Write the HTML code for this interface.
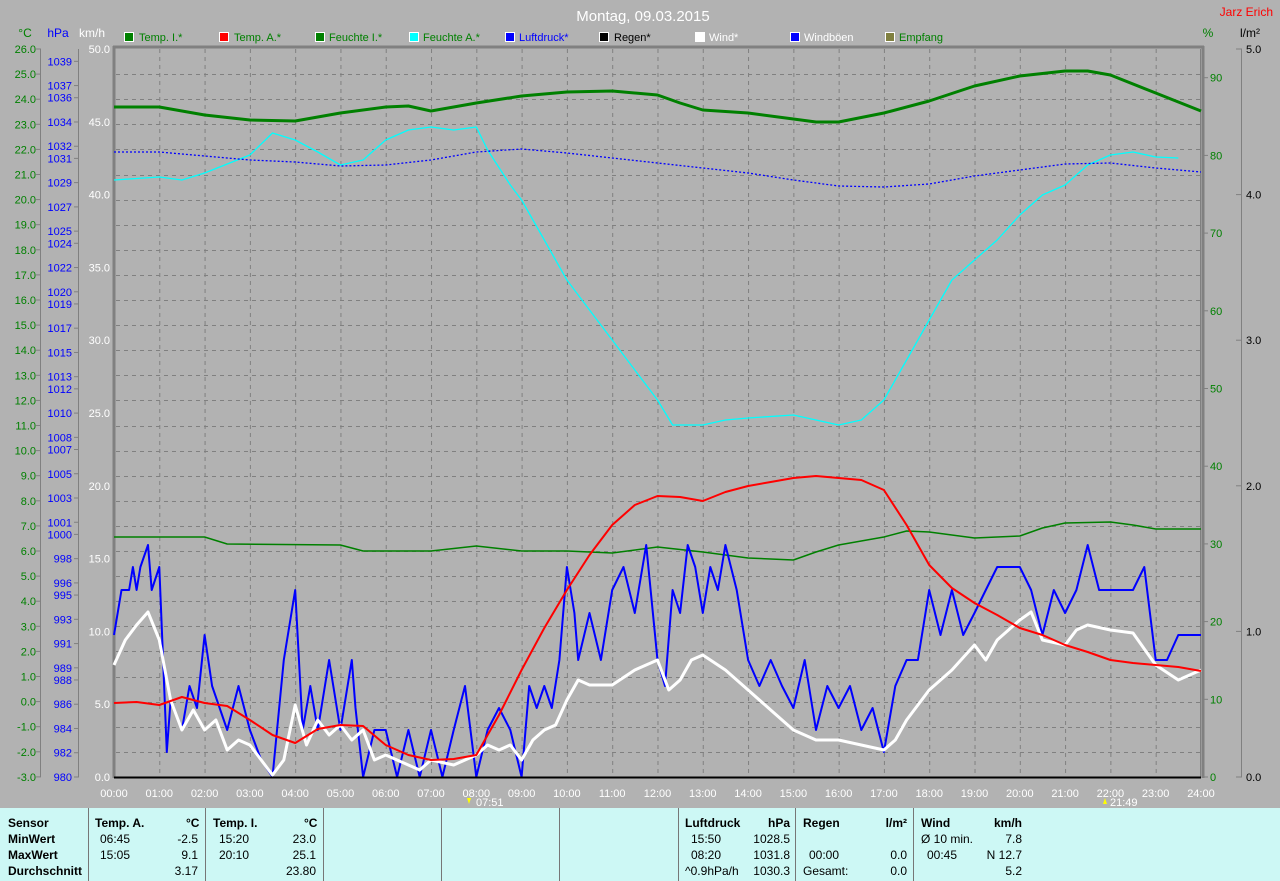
<!DOCTYPE html>
<html><head><meta charset="utf-8"><style>
body{margin:0;width:1280px;height:881px;background:#b2b2b2;overflow:hidden;font-family:"Liberation Sans",sans-serif;position:relative}
svg{position:absolute;left:0;top:0}
.tbl{position:absolute;left:0;top:808px;width:1280px;height:73px;background:#cdf8f5;font-size:12px;color:#000}
.tbl div{position:absolute;white-space:nowrap}
.b{font-weight:bold}
.vl{position:absolute;top:0;width:1px;height:73px;background:#777}
</style></head><body>
<svg width="1280" height="808" id="s" font-family="Liberation Sans, sans-serif" font-size="12">
<text x="643" y="21" fill="#fff" font-size="15" text-anchor="middle">Montag, 09.03.2015</text>
<text x="1273" y="16" fill="#f00" text-anchor="end" font-size="12">Jarz Erich</text>
<text x="25" y="37" fill="#008000" text-anchor="middle">°C</text>
<text x="58" y="37" fill="#00f" text-anchor="middle">hPa</text>
<text x="92" y="37" fill="#fff" text-anchor="middle">km/h</text>
<text x="1208" y="37" fill="#008000" text-anchor="middle">%</text>
<text x="1250" y="37" fill="#000" text-anchor="middle">l/m²</text>
<g font-size="11">
<rect x="124.5" y="32.5" width="9" height="9" fill="#008000" stroke="#fff"/><text x="139" y="41" fill="#008000">Temp. I.*</text>
<rect x="219.5" y="32.5" width="9" height="9" fill="#f00" stroke="#fff"/><text x="234" y="41" fill="#008000">Temp. A.*</text>
<rect x="315.5" y="32.5" width="9" height="9" fill="#008000" stroke="#fff"/><text x="329" y="41" fill="#008000">Feuchte I.*</text>
<rect x="409.5" y="32.5" width="9" height="9" fill="#0ff" stroke="#fff"/><text x="423" y="41" fill="#008000">Feuchte A.*</text>
<rect x="505.5" y="32.5" width="9" height="9" fill="#00f" stroke="#fff"/><text x="519" y="41" fill="#00f">Luftdruck*</text>
<rect x="599.5" y="32.5" width="9" height="9" fill="#000" stroke="#fff"/><text x="614" y="41" fill="#000">Regen*</text>
<rect x="695.5" y="32.5" width="9" height="9" fill="#fff" stroke="#fff"/><text x="709" y="41" fill="#fff">Wind*</text>
<rect x="790.5" y="32.5" width="9" height="9" fill="#00f" stroke="#fff"/><text x="804" y="41" fill="#fff">Windböen</text>
<rect x="885.5" y="32.5" width="9" height="9" fill="#808040" stroke="#fff"/><text x="899" y="41" fill="#008000">Empfang</text>
</g>
<g id="grid" stroke="#808080" stroke-dasharray="4,4" stroke-width="1"></g>
<g stroke="#808080" fill="none">
<line x1="40.5" y1="49" x2="40.5" y2="777"/>
<line x1="78.5" y1="49" x2="78.5" y2="777"/>
<line x1="1241.5" y1="49" x2="1241.5" y2="777"/>
<line x1="1200.5" y1="49" x2="1200.5" y2="777"/>
<line x1="113" y1="47" x2="1204" y2="47" stroke-width="3"/>
<line x1="114" y1="46" x2="114" y2="778" stroke-width="3"/>
<line x1="1203" y1="46" x2="1203" y2="778" stroke-width="3"/>
</g>
<g id="ticks" stroke="#808080"></g>
<g font-size="11" id="lab"></g>
<g id="curves" fill="none" stroke-linejoin="round"></g>
<line x1="114" y1="777.5" x2="1201" y2="777.5" stroke="#000" stroke-width="2"/>
<g fill="#fff" font-size="11" id="tl"></g>
<text x="476" y="806" fill="#fff" font-size="11">07:51</text>
<path d="M467 798l4 0-2 6z" fill="#ff0"/>
<text x="1110" y="806" fill="#fff" font-size="11">21:49</text>
<path d="M1103 804l4 0-2-6z" fill="#ff0"/>
</svg>
<div class="tbl">
<div class="vl" style="left:88px"></div><div class="vl" style="left:205px"></div><div class="vl" style="left:323px"></div><div class="vl" style="left:441px"></div><div class="vl" style="left:559px"></div><div class="vl" style="left:678px"></div><div class="vl" style="left:795px"></div><div class="vl" style="left:913px"></div>
<div class="b" style="left:8px;top:8px">Sensor</div><div class="b" style="left:8px;top:24px">MinWert</div><div class="b" style="left:8px;top:40px">MaxWert</div><div class="b" style="left:8px;top:56px">Durchschnitt</div>
<div class="b" style="left:95px;top:8px">Temp. A.</div><div class="b" style="left:186px;top:8px">°C</div>
<div style="left:100px;top:24px">06:45</div><div style="right:1082px;top:24px">-2.5</div>
<div style="left:100px;top:40px">15:05</div><div style="right:1082px;top:40px">9.1</div>
<div style="right:1082px;top:56px">3.17</div>
<div class="b" style="left:213px;top:8px">Temp. I.</div><div class="b" style="left:304px;top:8px">°C</div>
<div style="left:219px;top:24px">15:20</div><div style="right:964px;top:24px">23.0</div>
<div style="left:219px;top:40px">20:10</div><div style="right:964px;top:40px">25.1</div>
<div style="right:964px;top:56px">23.80</div>
<div class="b" style="left:685px;top:8px">Luftdruck</div><div class="b" style="right:490px;top:8px">hPa</div>
<div style="left:691px;top:24px">15:50</div><div style="right:490px;top:24px">1028.5</div>
<div style="left:691px;top:40px">08:20</div><div style="right:490px;top:40px">1031.8</div>
<div style="left:685px;top:56px">^0.9hPa/h</div><div style="right:490px;top:56px">1030.3</div>
<div class="b" style="left:803px;top:8px">Regen</div><div class="b" style="right:373px;top:8px">l/m²</div>
<div style="left:809px;top:40px">00:00</div><div style="right:373px;top:40px">0.0</div>
<div style="left:803px;top:56px">Gesamt:</div><div style="right:373px;top:56px">0.0</div>
<div class="b" style="left:921px;top:8px">Wind</div><div class="b" style="right:258px;top:8px">km/h</div>
<div style="left:921px;top:24px">Ø 10 min.</div><div style="right:258px;top:24px">7.8</div>
<div style="left:927px;top:40px">00:45</div><div style="right:258px;top:40px">N 12.7</div>
<div style="right:258px;top:56px">5.2</div>
</div>
<script>
var NS="http://www.w3.org/2000/svg";
function el(p,t,a,txt){var e=document.createElementNS(NS,t);for(var k in a)e.setAttribute(k,a[k]);if(txt!=null)e.textContent=txt;document.getElementById(p).appendChild(e);return e;}
var X=function(h){return 114+h*45.29;};
for(var h=1;h<24;h++){el("grid","line",{x1:X(h)+.5,y1:49,x2:X(h)+.5,y2:777});}
for(var k=1;k<29;k++){var y=49+k*25.1;el("grid","line",{x1:116,y1:Math.round(y)+.5,x2:1200,y2:Math.round(y)+.5});}
for(var h=0;h<=24;h++){el("tl","text",{x:X(h),y:797,"text-anchor":"middle"},(h<10?"0":"")+h+":00");}
for(var k=0;k<=29;k++){var v=26-k,y=49+k*25.1;el("lab","text",{x:36,y:y+4,fill:"#008000","text-anchor":"end"},v.toFixed(1));el("ticks","line",{x1:36,y1:y,x2:41,y2:y});}
[1039,1037,1036,1034,1032,1031,1029,1027,1025,1024,1022,1020,1019,1017,1015,1013,1012,1010,1008,1007,1005,1003,1001,1000,998,996,995,993,991,989,988,986,984,982,980].forEach(function(v){var y=777-(v-980)*12.13;el("lab","text",{x:72,y:y+4,fill:"#00f","text-anchor":"end"},v);el("ticks","line",{x1:74,y1:y,x2:79,y2:y});});
for(var k=0;k<=10;k++){var y=777-k*72.8;el("lab","text",{x:110,y:y+4,fill:"#fff","text-anchor":"end"},(k*5).toFixed(1));}
for(var k=0;k<=9;k++){var y=777-k*77.7;el("lab","text",{x:1210,y:y+4,fill:"#008000"},k*10);el("ticks","line",{x1:1203,y1:y,x2:1208,y2:y});}
for(var k=0;k<=5;k++){var y=777-k*145.6;el("lab","text",{x:1246,y:y+4,fill:"#000"},k.toFixed(1));el("ticks","line",{x1:1236,y1:y,x2:1242,y2:y});}
function T(s){var p=s.split(":");return +p[0]+(+p[1])/60;}
function curve(d,c,w,dash){var pts=[];for(var i=0;i<d.length;i+=2)pts.push(X(T(d[i])).toFixed(1)+","+d[i+1]);var a={points:pts.join(" "),stroke:c,"stroke-width":w};if(dash)a["stroke-dasharray"]=dash;el("curves","polyline",a);}
curve(["0:00",537,"2:00",537,"2:30",544,"5:00",545,"5:30",551,"7:00",551,"8:00",546,"9:00",551,"10:00",551,"11:00",553,"12:00",547,"13:00",552,"14:00",558,"15:00",560,"15:30",552,"16:00",545,"17:00",537,"17:30",531,"18:00",532,"19:00",538,"20:00",536,"20:30",528,"21:00",523,"22:00",522,"22:30",525,"23:00",529,"24:00",529],"#008000",1.5);
curve(["0:00",180,"1:00",177,"1:30",180,"2:00",173,"3:00",155,"3:30",133,"4:00",140,"4:30",152,"5:00",165,"5:30",160,"6:00",140,"6:30",130,"7:00",127,"7:30",130,"8:00",127,"8:15",150,"8:45",185,"9:00",200,"9:30",240,"10:00",280,"10:30",310,"11:00",340,"11:30",370,"12:00",400,"12:20",425,"13:00",425,"13:30",420,"14:00",418,"15:00",415,"15:30",420,"16:00",425,"16:30",420,"17:00",400,"17:30",360,"18:00",320,"18:30",280,"19:00",260,"19:30",240,"20:00",215,"20:30",195,"21:00",185,"21:30",165,"22:00",155,"22:30",152,"23:00",157,"23:30",158],"#00ffff",1.3);
curve(["0:00",152,"1:00",152,"2:00",156,"3:00",160,"4:00",162,"5:00",166,"6:00",165,"7:00",160,"8:00",152,"9:00",149,"10:00",153,"11:00",158,"12:00",163,"13:00",168,"14:00",173,"15:00",180,"16:00",186,"17:00",187,"18:00",184,"19:00",176,"20:00",170,"21:00",164,"22:00",163,"23:00",168,"24:00",172],"#0000ff",1.3,"2,2");
curve(["0:00",107,"1:00",107,"2:00",115,"3:00",120,"4:00",121,"5:00",113,"6:00",107,"6:30",106,"7:00",111,"8:00",103,"9:00",96,"10:00",92,"11:00",91,"12:00",95,"12:30",103,"13:00",110,"14:00",113,"15:00",119,"15:30",122,"16:00",122,"17:00",113,"18:00",101,"19:00",86,"20:00",76,"21:00",71,"21:30",71,"22:00",75,"23:00",93,"24:00",111],"#008000",3);
curve(["0:00",635,"0:10",590,"0:20",590,"0:25",567,"0:30",590,"0:35",567,"0:45",545,"0:50",590,"1:00",567,"1:05",660,"1:10",752,"1:15",700,"1:30",730,"1:40",686,"1:50",708,"2:00",635,"2:10",686,"2:30",730,"2:45",686,"3:00",730,"3:15",760,"3:30",777,"3:45",660,"4:00",590,"4:10",730,"4:20",686,"4:30",730,"4:45",660,"5:00",730,"5:15",660,"5:20",708,"5:30",777,"5:45",730,"6:00",730,"6:15",777,"6:30",730,"6:45",777,"7:00",730,"7:15",777,"7:30",730,"7:45",686,"8:00",777,"8:15",730,"8:30",708,"8:45",730,"9:00",777,"9:10",686,"9:20",708,"9:30",686,"9:40",708,"9:50",660,"10:00",567,"10:10",613,"10:15",660,"10:30",613,"10:45",660,"11:00",590,"11:15",567,"11:30",613,"11:45",545,"12:00",660,"12:10",686,"12:20",590,"12:30",613,"12:40",545,"12:50",567,"13:00",613,"13:10",567,"13:20",590,"13:30",545,"13:45",590,"14:00",660,"14:15",686,"14:30",660,"14:45",686,"15:00",708,"15:15",660,"15:30",730,"15:45",686,"16:00",708,"16:15",686,"16:30",730,"16:45",708,"17:00",752,"17:15",686,"17:30",660,"17:45",660,"18:00",590,"18:15",635,"18:30",590,"18:45",635,"19:00",613,"19:15",590,"19:30",567,"20:00",567,"20:15",590,"20:30",635,"20:45",590,"21:00",613,"21:15",590,"21:30",545,"21:45",590,"22:00",590,"22:30",590,"22:45",567,"23:00",660,"23:15",660,"23:30",635,"23:45",635,"24:00",635],"#0000ff",2);
curve(["0:00",665,"0:15",640,"0:30",625,"0:45",612,"1:00",640,"1:15",700,"1:30",730,"1:45",710,"2:00",730,"2:15",720,"2:30",750,"2:45",740,"3:00",745,"3:15",760,"3:30",775,"3:45",760,"4:00",705,"4:15",745,"4:30",720,"4:45",735,"5:00",725,"5:15",740,"5:30",730,"5:45",760,"6:00",755,"6:30",765,"6:45",770,"7:00",760,"7:30",765,"8:00",755,"8:15",745,"8:30",750,"8:45",745,"9:00",760,"9:15",740,"9:30",730,"9:45",725,"10:00",700,"10:15",680,"10:30",685,"11:00",685,"11:30",670,"12:00",660,"12:15",690,"12:30",680,"12:45",660,"13:00",655,"13:30",670,"14:00",690,"14:30",710,"15:00",730,"15:30",740,"16:00",740,"16:30",745,"17:00",750,"17:15",740,"17:30",720,"18:00",690,"18:30",670,"19:00",645,"19:15",660,"19:30",640,"20:00",620,"20:15",612,"20:30",640,"21:00",645,"21:15",630,"21:30",625,"22:00",630,"22:30",633,"23:00",665,"23:30",680,"24:00",670],"#ffffff",3);
curve(["0:00",703,"0:30",702,"1:00",705,"1:30",697,"2:00",703,"2:30",706,"3:00",720,"3:30",735,"4:00",743,"4:30",729,"5:00",725,"5:30",726,"6:00",745,"6:30",755,"7:00",760,"7:30",759,"8:00",755,"8:30",715,"9:00",670,"9:30",628,"10:00",590,"10:30",555,"11:00",525,"11:30",505,"12:00",496,"12:30",497,"13:00",501,"13:30",492,"14:00",486,"14:30",482,"15:00",478,"15:30",476,"16:00",478,"16:30",480,"17:00",490,"17:30",525,"18:00",565,"18:30",588,"19:00",603,"19:30",615,"20:00",628,"20:30",635,"21:00",645,"21:30",652,"22:00",660,"22:30",663,"23:00",665,"23:30",667,"24:00",671],"#ff0000",2);
</script>
</body></html>
